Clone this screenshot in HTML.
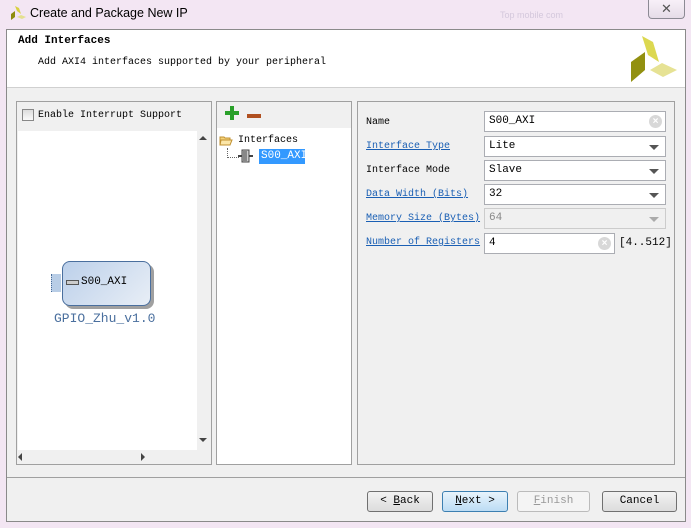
<!DOCTYPE html>
<html><head><style>
*{margin:0;padding:0;box-sizing:border-box}
body{width:691px;height:528px;background:#f3e6f3;font-family:"Liberation Mono","Noto Sans CJK SC",monospace;font-size:10px;color:#000;position:relative;overflow:hidden}
.a{position:absolute}
.title{left:30px;top:6px;font-family:"Liberation Sans",sans-serif;font-size:12.5px;color:#000}
.main{left:6px;top:29px;width:680px;height:493px;background:#f0f0f0;border:1px solid #8a8a8a}
.hdr{left:7px;top:30px;width:678px;height:58px;background:#fff;border-bottom:1px solid #d0d0d0}
.panel{border:1px solid #a0a0a0}
.lbl{left:366px;font-size:10px}
.lnk{color:#1a5fb4;text-decoration:underline}
.fld{left:484px;width:182px;height:21px;background:#fff;border:1px solid #abadb3;padding:3px 4px;font-size:11px}
.arr{position:absolute;right:6px;top:8px;width:0;height:0;border-left:5px solid transparent;border-right:5px solid transparent;border-top:5px solid #555}
.clr{position:absolute;right:3px;top:3px;width:13px;height:13px;border-radius:50%;background:#d8d8d8;color:#fff;font-size:10px;line-height:13px;text-align:center;font-family:"Liberation Sans",sans-serif;font-weight:bold}
.btn{top:491px;height:21px;border:1px solid #707070;border-radius:3px;background:linear-gradient(#f2f2f2,#dcdcdc);text-align:center;font-size:11px;line-height:19px}
</style></head><body>
<svg class="a" style="left:0;top:0" width="691" height="90">
<path d="M15 6l4 2 2 6-4-3z" fill="#d8d040"/><path d="M15 11l0 6-4 3v-6z" fill="#8e8c0c"/><path d="M17 17l4-2 5 2-4 2z" fill="#e4e090"/>
<path d="M642 36l11 6 6 20-11-7z" fill="#dcd850"/>
<path d="M645 52v18l-14 12v-20z" fill="#929010"/>
<path d="M650 70l12-7 15 7-14 7z" fill="#e6e294"/>
</svg>
<div class="a title">Create and Package New IP</div>
<div class="a" style="left:500px;top:10px;font-size:9px;color:#d4c8dc;font-family:'Liberation Sans',sans-serif">Top mobile com</div>
<div class="a" style="left:648px;top:0;width:37px;height:19px;border:1px solid #8c8a94;border-top:none;border-radius:0 0 4px 4px;background:linear-gradient(#f8f0f8,#e6dce8);text-align:center;font-family:'Liberation Sans',sans-serif;font-size:13px;line-height:17px;color:#555">✕</div>
<div class="a main"></div>
<div class="a hdr"></div>
<svg class="a" style="left:628px;top:33px" width="52" height="52"><path d="M14 3l11 6 6 20-11-7z" fill="#dcd850"/><path d="M17 19v18l-14 12v-20z" fill="#929010"/><path d="M22 37l12-7 15 7-14 7z" fill="#e6e294"/></svg>
<div class="a" style="left:18px;top:35px;font-weight:bold;font-size:11px">Add Interfaces</div>
<div class="a" style="left:38px;top:57px">Add AXI4 interfaces supported by your peripheral</div>
<!-- left panel -->
<div class="a panel" style="left:16px;top:101px;width:196px;height:364px;background:#f0f0f0"></div>
<div class="a" style="left:18px;top:131px;width:179px;height:319px;background:#fff"></div>
<div class="a" style="left:197px;top:131px;width:13px;height:319px;background:#f0f0f0"></div>
<div class="a" style="left:199px;top:136px;border-left:4px solid transparent;border-right:4px solid transparent;border-bottom:4px solid #444"></div>
<div class="a" style="left:199px;top:438px;border-left:4px solid transparent;border-right:4px solid transparent;border-top:4px solid #444"></div>
<div class="a" style="left:18px;top:450px;width:179px;height:13px;background:#f0f0f0"></div>
<div class="a" style="left:18px;top:453px;border-top:4px solid transparent;border-bottom:4px solid transparent;border-right:4px solid #444"></div>
<div class="a" style="left:141px;top:453px;border-top:4px solid transparent;border-bottom:4px solid transparent;border-left:4px solid #444"></div>
<div class="a" style="left:22px;top:109px;width:12px;height:12px;border:1px solid #888;background:linear-gradient(#ddd,#fafafa)"></div>
<div class="a" style="left:38px;top:110px">Enable Interrupt Support</div>
<div class="a" style="left:51px;top:274px;width:10px;height:18px;background:#b8cde6;border-left:1px dotted #4a6d9a"></div>
<div class="a" style="left:65px;top:264px;width:89px;height:45px;background:#a0a0a0;border-radius:8px"></div>
<div class="a" style="left:62px;top:261px;width:89px;height:45px;border:1px solid #4a6f9e;border-radius:8px;background:linear-gradient(135deg,#bcd0ea,#e8eef6)"></div>
<div class="a" style="left:66px;top:280px;width:13px;height:5px;border:1px solid #555;background:#ccc"></div>
<div class="a" style="left:81px;top:276px;font-size:11px">S00_AXI</div>
<div class="a" style="left:54px;top:311px;font-size:13px;color:#4a6f9e">GPIO_Zhu_v1.0</div>
<!-- middle -->
<div class="a panel" style="left:216px;top:101px;width:136px;height:364px;background:#fff"></div>
<div class="a" style="left:217px;top:102px;width:134px;height:26px;background:#f0f0f0"></div>
<div class="a" style="left:225px;top:111px;width:14px;height:4px;background:#2aa02a"></div>
<div class="a" style="left:230px;top:106px;width:4px;height:14px;background:#2aa02a"></div>
<div class="a" style="left:247px;top:114px;width:14px;height:4px;background:#b05020"></div>
<svg class="a" style="left:219px;top:135px" width="14" height="11"><path d="M1 2h4l1 1h5v7H1z" fill="#f4d27a" stroke="#c09030"/><path d="M2 5h11l-2 5H1z" fill="#fbe6a8" stroke="#c09030"/></svg>
<div class="a" style="left:238px;top:135px">Interfaces</div>
<div class="a" style="left:227px;top:148px;width:1px;height:10px;border-left:1px dotted #666"></div>
<div class="a" style="left:227px;top:157px;width:12px;border-top:1px dotted #666"></div>
<svg class="a" style="left:238px;top:149px" width="16" height="14"><rect x="4" y="1" width="7" height="12" fill="#ccc" stroke="#444"/><path d="M6 2v10M8 2v10" stroke="#444"/><path d="M0 7h4M11 7h4" stroke="#444" stroke-width="2"/></svg>
<div class="a" style="left:259px;top:149px;width:46px;height:15px;background:#3399ff;color:#fff;padding:1px 2px;font-size:11px">S00_AXI</div>
<!-- right -->
<div class="a panel" style="left:357px;top:101px;width:318px;height:364px;background:#f0f0f0"></div>
<div class="a lbl" style="top:117px">Name</div>
<div class="a lbl lnk" style="top:141px">Interface Type</div>
<div class="a lbl" style="top:165px">Interface Mode</div>
<div class="a lbl lnk" style="top:189px">Data Width (Bits)</div>
<div class="a lbl lnk" style="top:213px">Memory Size (Bytes)</div>
<div class="a lbl lnk" style="top:237px">Number of Registers</div>
<div class="a fld" style="top:111px">S00_AXI<span class="clr">×</span></div>
<div class="a fld" style="top:136px">Lite<span class="arr"></span></div>
<div class="a fld" style="top:160px">Slave<span class="arr"></span></div>
<div class="a fld" style="top:184px">32<span class="arr"></span></div>
<div class="a fld" style="top:208px;background:#f0f0f0;color:#888;border-color:#ccc">64<span class="arr" style="border-top-color:#aaa"></span></div>
<div class="a fld" style="top:233px;width:131px">4<span class="clr">×</span></div>
<div class="a" style="left:619px;top:237px;font-size:11px">[4..512]</div>
<!-- bottom -->
<div class="a" style="left:7px;top:477px;width:678px;border-top:1px solid #a0a0a0"></div>
<div class="a btn" style="left:367px;width:66px">&lt; <u>B</u>ack</div>
<div class="a btn" style="left:442px;width:66px;border-color:#3c7fb1;background:linear-gradient(#e8f4fc,#bcdcf4)"><u>N</u>ext &gt;</div>
<div class="a btn" style="left:517px;width:73px;border-color:#bbb;background:#f4f4f4;color:#999"><u>F</u>inish</div>
<div class="a btn" style="left:602px;width:75px">Cancel</div>
</body></html>
